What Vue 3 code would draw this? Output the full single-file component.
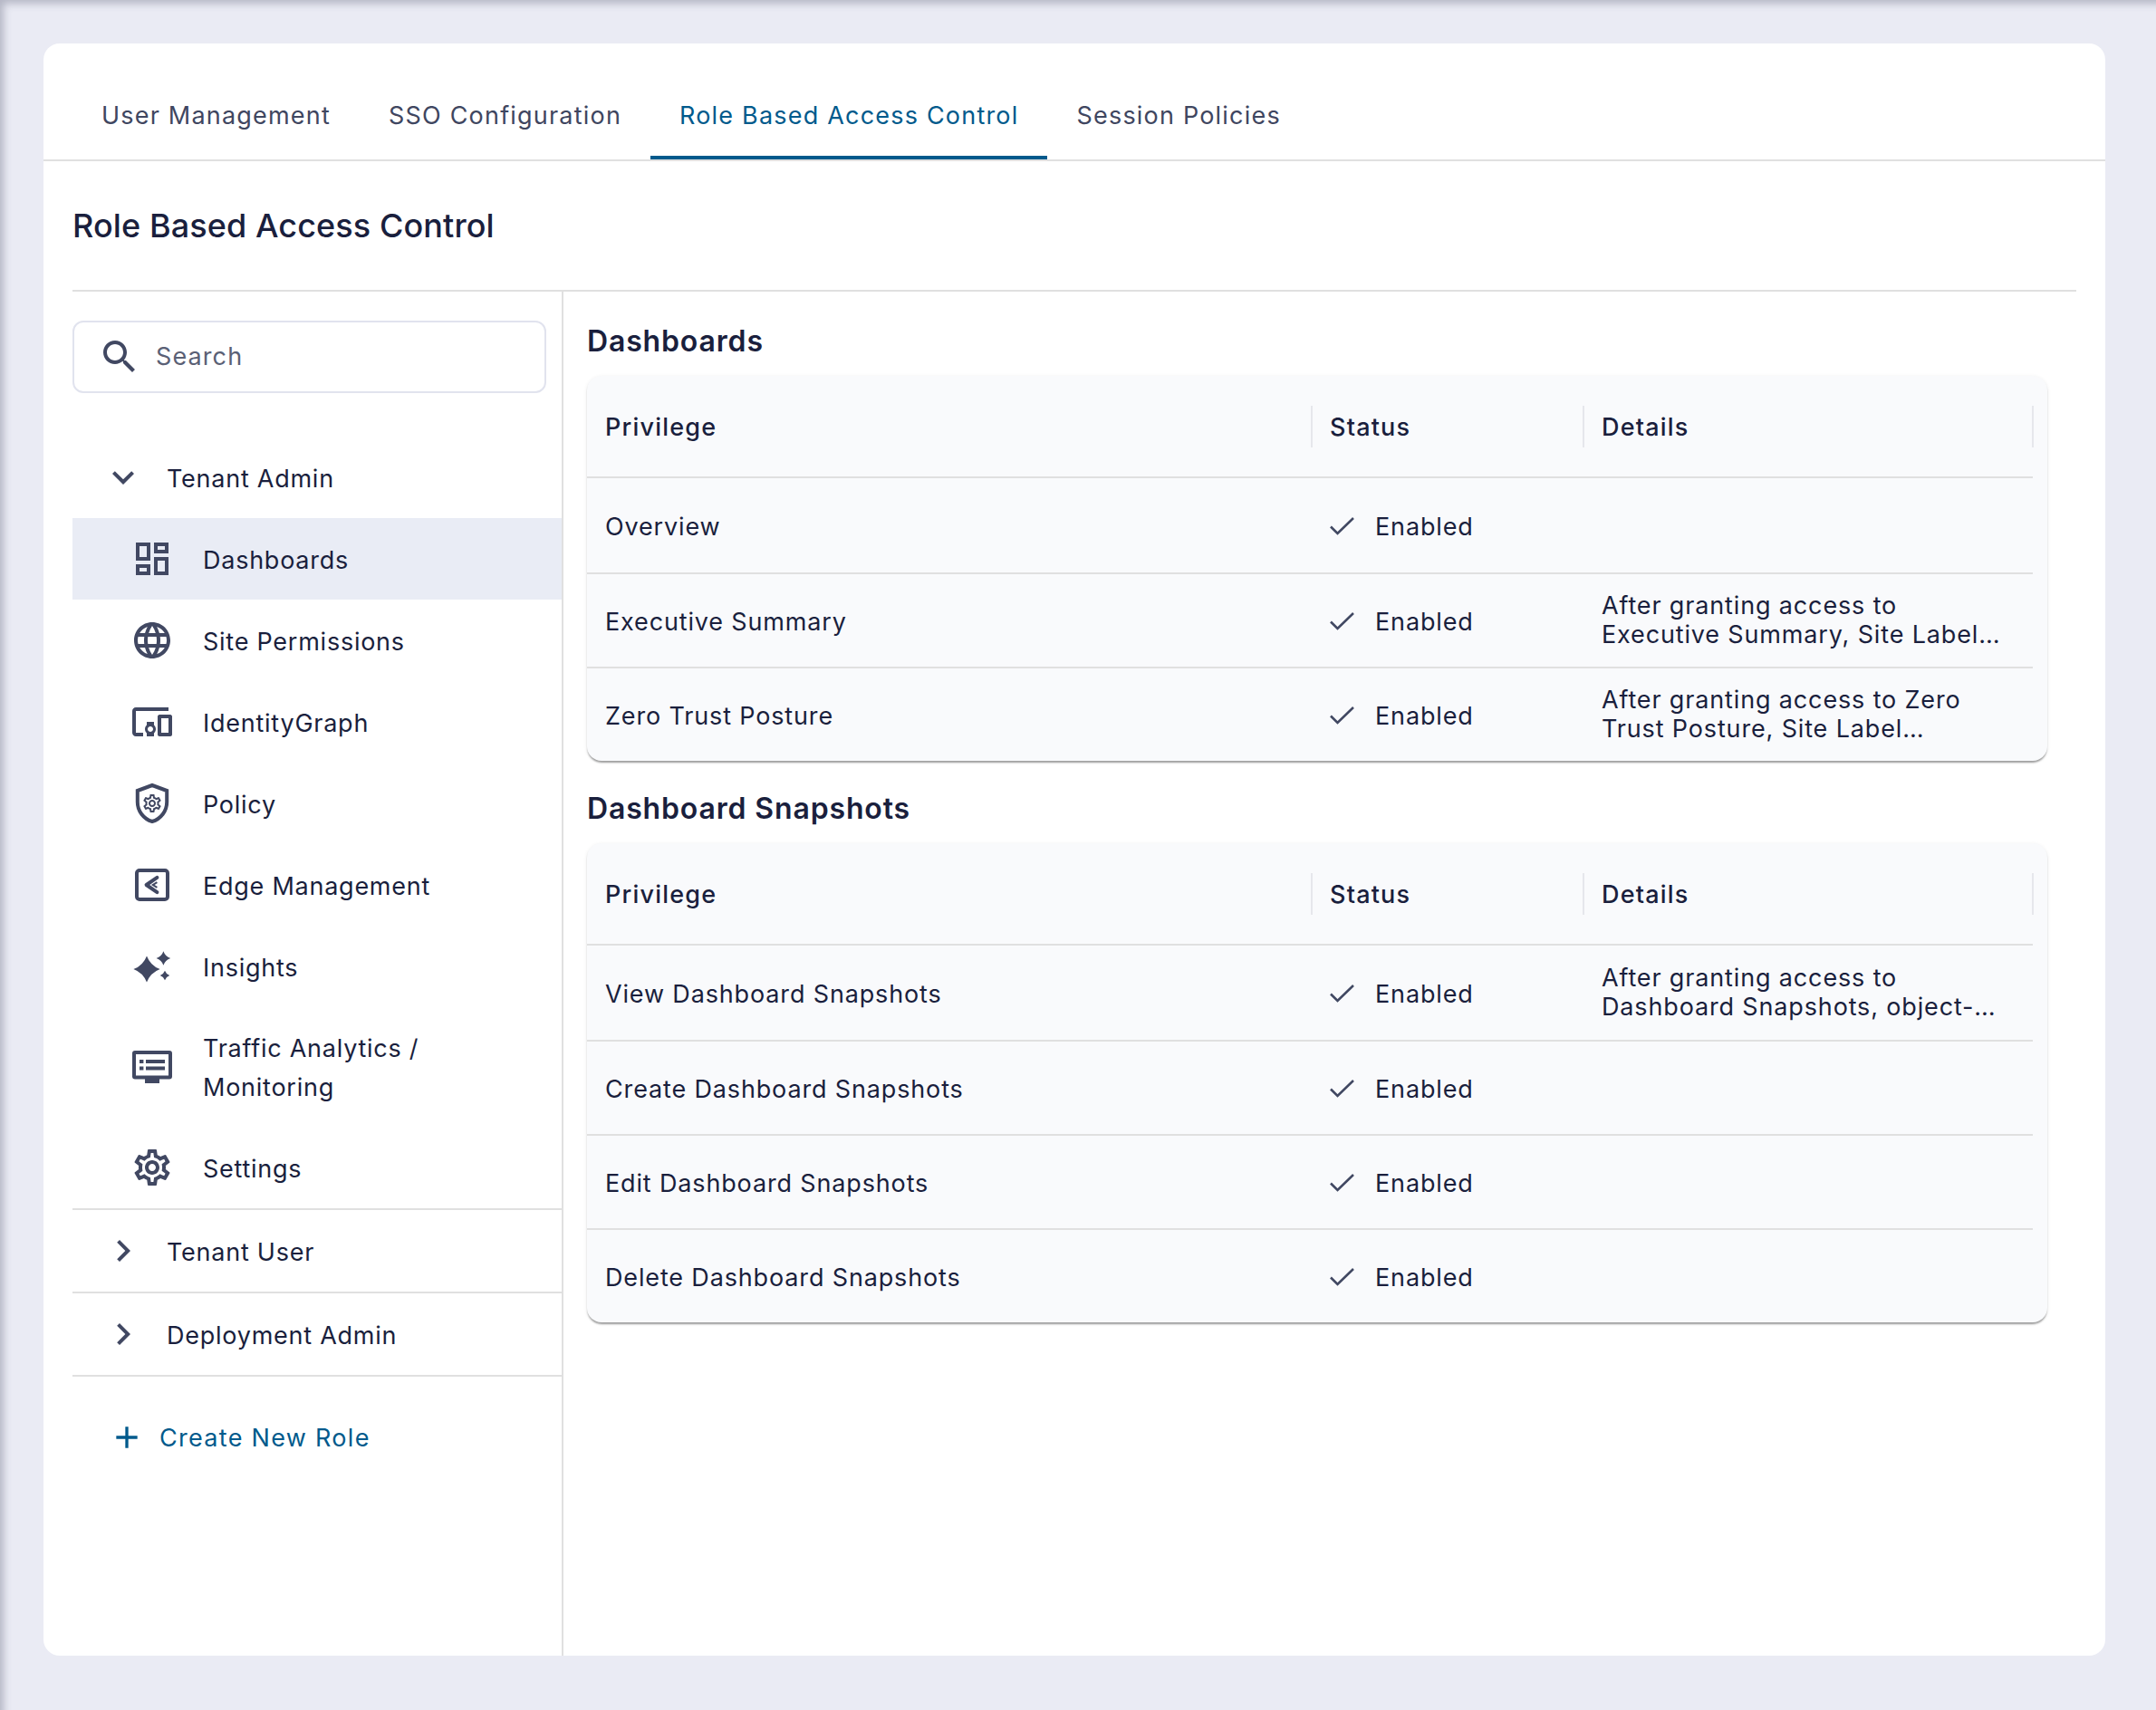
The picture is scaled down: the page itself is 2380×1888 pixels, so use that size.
<script setup>
const tabs = ['User Management', 'SSO Configuration', 'Role Based Access Control', 'Session Policies']

const gear = 'M19.43 12.98c.04-.32.07-.64.07-.98 0-.34-.03-.66-.07-.98l2.11-1.65c.19-.15.24-.42.12-.64l-2-3.46c-.09-.16-.26-.25-.44-.25-.06 0-.12.01-.17.03l-2.49 1c-.52-.4-1.08-.73-1.69-.98l-.38-2.65C14.46 2.18 14.25 2 14 2h-4c-.25 0-.46.18-.49.42l-.38 2.65c-.61.25-1.17.59-1.69.98l-2.49-1c-.06-.02-.12-.03-.18-.03-.17 0-.34.09-.43.25l-2 3.46c-.13.22-.07.49.12.64l2.11 1.65c-.04.32-.07.65-.07.98 0 .33.03.66.07.98l-2.11 1.65c-.19.15-.24.42-.12.64l2 3.46c.09.16.26.25.44.25.06 0 .12-.01.17-.03l2.49-1c.52.4 1.08.73 1.69.98l.38 2.65c.03.24.24.42.49.42h4c.25 0 .46-.18.49-.42l.38-2.65c.61-.25 1.17-.59 1.69-.98l2.49 1c.06.02.12.03.18.03.17 0 .34-.09.43-.25l2-3.46c.12-.22.07-.49-.12-.64l-2.11-1.65zm-1.98-1.71c.04.31.05.52.05.73 0 .21-.02.43-.05.73l-.14 1.13.89.7 1.08.84-.7 1.21-1.27-.51-1.04-.42-.9.68c-.43.32-.84.56-1.25.73l-1.06.43-.16 1.13-.2 1.35h-1.4l-.19-1.35-.16-1.13-1.06-.43c-.43-.18-.83-.41-1.23-.71l-.91-.7-1.06.43-1.27.51-.7-1.21 1.08-.84.89-.7-.14-1.13c-.03-.31-.05-.54-.05-.74s.02-.43.05-.73l.14-1.13-.89-.7-1.08-.84.7-1.21 1.27.51 1.04.42.9-.68c.43-.32.84-.56 1.25-.73l1.06-.43.16-1.13.2-1.35h1.39l.19 1.35.16 1.13 1.06.43c.43.18.83.41 1.23.71l.91.7 1.06-.43 1.27-.51.7 1.21-1.07.85-.89.7.14 1.13zM12 8c-2.21 0-4 1.79-4 4s1.79 4 4 4 4-1.79 4-4-1.79-4-4-4zm0 6c-1.1 0-2-.9-2-2s.9-2 2-2 2 .9 2 2-.9 2-2 2z'

const navItems = [
  { key: 'dash', label: 'Dashboards', selected: true },
  { key: 'site', label: 'Site Permissions' },
  { key: 'graph', label: 'IdentityGraph' },
  { key: 'policy', label: 'Policy' },
  { key: 'edge', label: 'Edge Management' },
  { key: 'insights', label: 'Insights' },
  { key: 'traffic', label: 'Traffic Analytics / Monitoring', tall: true },
  { key: 'settings', label: 'Settings' }
]

const sections = [
  {
    title: 'Dashboards',
    rows: [
      { name: 'Overview', details: [] },
      { name: 'Executive Summary', details: ['After granting access to', 'Executive Summary, Site Label…'] },
      { name: 'Zero Trust Posture', details: ['After granting access to Zero', 'Trust Posture, Site Label…'] }
    ]
  },
  {
    title: 'Dashboard Snapshots',
    rows: [
      { name: 'View Dashboard Snapshots', details: ['After granting access to', 'Dashboard Snapshots, object-…'] },
      { name: 'Create Dashboard Snapshots', details: [] },
      { name: 'Edit Dashboard Snapshots', details: [] },
      { name: 'Delete Dashboard Snapshots', details: [] }
    ]
  }
]
</script>

<template>
  <div class="page">
    <div class="card">
      <div class="tabs">
        <div v-for="tab in tabs" :key="tab" class="tab" :class="{ active: tab === 'Role Based Access Control' }">{{ tab }}</div>
      </div>

      <div class="body">
        <h1 class="title">Role Based Access Control</h1>

        <div class="split">
          <aside class="side">
            <div class="search">
              <svg class="search-icon" viewBox="0 0 24 24"><path d="M15.5 14h-.79l-.28-.27C15.41 12.59 16 11.11 16 9.5 16 5.91 13.09 3 9.5 3S3 5.91 3 9.5 5.91 16 9.5 16c1.61 0 3.09-.59 4.23-1.57l.27.28v.79l5 4.99L20.49 19l-4.99-5zm-6 0C7.01 14 5 11.99 5 9.5S7.01 5 9.5 5 14 7.01 14 9.5 11.99 14 9.5 14z" /></svg>
              <span class="search-text">Search</span>
            </div>

            <div class="group">
              <svg class="chev" viewBox="0 0 24 24"><path d="M16.59 8.59 12 13.17 7.41 8.59 6 10l6 6 6-6z" /></svg>
              <span class="group-label">Tenant Admin</span>
            </div>

            <div v-for="item in navItems" :key="item.key" class="item" :class="{ selected: item.selected, tall: item.tall }">
              <svg class="nav-icon" viewBox="0 0 24 24">
                <path v-if="item.key === 'dash'" d="M19 5v2h-4V5h4M9 5v6H5V5h4m10 8v6h-4v-6h4M9 17v2H5v-2h4M21 3h-8v6h8V3zM11 3H3v10h8V3zm10 8h-8v10h8V11zm-10 4H3v6h8v-6z" />
                <path v-if="item.key === 'site'" d="M11.99 2C6.47 2 2 6.48 2 12s4.47 10 9.99 10C17.52 22 22 17.52 22 12S17.52 2 11.99 2zm6.93 6h-2.95c-.32-1.25-.78-2.45-1.38-3.56 1.84.63 3.37 1.91 4.33 3.56zM12 4.04c.83 1.2 1.48 2.53 1.91 3.96h-3.82c.43-1.43 1.08-2.76 1.91-3.96zM4.26 14C4.1 13.36 4 12.69 4 12s.1-1.36.26-2h3.38c-.08.66-.14 1.32-.14 2 0 .68.06 1.34.14 2H4.26zm.82 2h2.95c.32 1.25.78 2.45 1.38 3.56-1.84-.63-3.37-1.9-4.33-3.56zm2.95-8H5.08c.96-1.66 2.49-2.93 4.33-3.56C8.81 5.55 8.35 6.75 8.03 8zM12 19.96c-.83-1.2-1.48-2.53-1.91-3.96h3.82c-.43 1.43-1.08 2.76-1.91 3.96zM14.34 14H9.66c-.09-.66-.16-1.32-.16-2 0-.68.07-1.35.16-2h4.68c.09.65.16 1.32.16 2 0 .68-.07 1.34-.16 2zm.25 5.56c.6-1.11 1.06-2.31 1.38-3.56h2.95c-.96 1.65-2.49 2.93-4.33 3.56zM16.36 14c.08-.66.14-1.32.14-2 0-.68-.06-1.34-.14-2h3.38c.16.64.26 1.31.26 2s-.1 1.36-.26 2h-3.38z" />
                <path v-if="item.key === 'graph'" d="M3 6h18V4H3c-1.1 0-2 .9-2 2v12c0 1.1.9 2 2 2h4v-2H3V6zm10 6H9v1.78c-.61.55-1 1.33-1 2.22 0 .89.39 1.67 1 2.22V20h4v-1.78c.61-.55 1-1.34 1-2.22 0-.88-.39-1.67-1-2.22V12zm-2 5.5c-.83 0-1.5-.67-1.5-1.5s.67-1.5 1.5-1.5 1.5.67 1.5 1.5-.67 1.5-1.5 1.5zM22 8h-6c-.5 0-1 .5-1 1v10c0 .5.5 1 1 1h6c.5 0 1-.5 1-1V9c0-.5-.5-1-1-1zm-1 10h-4v-8h4v8z" />
                <template v-if="item.key === 'policy'">
                  <path class="line" d="M12 2 3.9 5v6.2c0 5 3.4 9.5 8.100 10.800 4.700-1.300 8.100-5.800 8.100-10.800V5z" />
                  <path :d="gear" transform="translate(12 12) scale(.5) translate(-12 -12)" />
                </template>
                <template v-if="item.key === 'edge'">
                  <rect class="line" x="3.500" y="4" width="17" height="16" rx="1.500" />
                  <path class="line round" d="M14.700 7.900 8.800 12l5.900 4.100" />
                  <path class="line thin" d="M14.700 10.600 12.400 12l2.300 1.400" />
                </template>
                <template v-if="item.key === 'insights'">
                  <path d="M9 6.200Q11 11.500 16.300 13.500 11 15.500 9 20.800 7 15.500 1.700 13.500 7 11.500 9 6.200z" />
                  <path d="M18.200 3.600Q19.200 6.500 22.100 7.500 19.200 8.500 18.200 11.400 17.200 8.500 14.300 7.500 17.200 6.500 18.200 3.600z" />
                  <path d="M19 14.400Q19.700 16.300 21.600 17 19.700 17.700 19 19.600 18.300 17.700 16.400 17 18.300 16.300 19 14.400z" />
                </template>
                <path v-if="item.key === 'traffic'" fill-rule="evenodd" d="M2.500 3h19A1.500 1.500 0 0 1 23 4.500v12.800a1.500 1.500 0 0 1-1.500 1.500H16V21H8v-2.200H2.500A1.500 1.500 0 0 1 1 17.300V4.500A1.500 1.500 0 0 1 2.500 3zM3 5v11.800h18V5zM5 8h2.200v2H5zM8.500 8H19v2H8.500zM5 11.800h2.200v2H5zM8.500 11.800H19v2H8.500z" />
                <path v-if="item.key === 'settings'" :d="gear" />
              </svg>
              <span class="item-label">{{ item.label }}</span>
            </div>

            <div class="group bordered">
              <svg class="chev" viewBox="0 0 24 24"><path d="M10 6 8.590 7.410 13.170 12l-4.580 4.590L10 18l6-6z" /></svg>
              <span class="group-label">Tenant User</span>
            </div>
            <div class="group bordered end">
              <svg class="chev" viewBox="0 0 24 24"><path d="M10 6 8.590 7.410 13.170 12l-4.580 4.590L10 18l6-6z" /></svg>
              <span class="group-label">Deployment Admin</span>
            </div>

            <div class="create">
              <svg class="plus" viewBox="0 0 24 24"><path d="M19 13h-6v6h-2v-6H5v-2h6V5h2v6h6v2z" /></svg>
              <span>Create New Role</span>
            </div>
          </aside>

          <main class="content">
            <section v-for="section in sections" :key="section.title" class="section">
              <h2 class="section-title">{{ section.title }}</h2>
              <div class="paper">
                <div class="row head">
                  <div class="cell">Privilege</div>
                  <div class="cell">Status</div>
                  <div class="cell">Details</div>
                </div>
                <div v-for="row in section.rows" :key="row.name" class="row">
                  <div class="cell">{{ row.name }}</div>
                  <div class="cell status">
                    <svg class="check" viewBox="0 0 27 20"><path d="M1 10.500 8.500 18 26 1" /></svg>
                    <span>Enabled</span>
                  </div>
                  <div class="cell details">
                    <div v-for="line in row.details" :key="line">{{ line }}</div>
                  </div>
                </div>
              </div>
            </section>
          </main>
        </div>
      </div>
    </div>
  </div>
</template>

<style>
html, body {
  margin: 0;
  background: #eaebf4;
}
</style>

<style scoped>
.page {
  width: 2380px;
  height: 1888px;
  box-sizing: border-box;
  padding: 48px 56px 60px 48px;
  background: #eaebf4;
  box-shadow: inset 8px 8px 8px -4px rgba(60, 64, 90, 0.3);
  font-family: Inter, "Liberation Sans", sans-serif;
  color: #1a1f3d;
  font-size: 27px;
  letter-spacing: 0.85px;
}
.card {
  height: 100%;
  background: #fff;
  border-radius: 18px;
  display: flex;
  flex-direction: column;
}
.tabs {
  display: flex;
  height: 130px;
  box-sizing: border-box;
  padding-left: 32px;
  border-bottom: 2px solid #e0e0e0;
}
.tab {
  height: 128px;
  box-sizing: border-box;
  padding: 30px 32px 0;
  display: flex;
  align-items: center;
  color: #3f4660;
  letter-spacing: 1.2px;
  white-space: nowrap;
}
.tab.active {
  color: #005a8c;
  box-shadow: inset 0 -4px 0 #005a8c;
}
.body {
  flex: 1;
  min-height: 0;
  padding: 0 32px;
  display: flex;
  flex-direction: column;
}
.title {
  margin: 0;
  height: 142px;
  border-bottom: 2px solid #e0e0e0;
  display: flex;
  align-items: center;
  font-size: 36px;
  font-weight: 500;
  letter-spacing: 0.1px;
}
.split {
  flex: 1;
  display: flex;
  min-height: 0;
}
.side {
  width: 540px;
  border-right: 2px solid #e0e0e0;
  box-sizing: content-box;
  letter-spacing: 0.75px;
}
.search {
  width: 523px;
  height: 80px;
  box-sizing: border-box;
  margin-top: 32px;
  margin-bottom: 48px;
  border: 2px solid #e1e3ee;
  border-radius: 12px;
  display: flex;
  align-items: center;
  padding-left: 26px;
  gap: 16px;
  color: #5a6075;
}
.search-text {
  padding-bottom: 2px;
  letter-spacing: 1.1px;
}
.search-icon {
  width: 48px;
  height: 48px;
  fill: #414862;
}
.group {
  display: flex;
  align-items: center;
  height: 90px;
  padding-left: 32px;
  gap: 24px;
}
.group-label,
.item-label {
  padding-top: 2px;
}
.chev {
  width: 48px;
  height: 48px;
  fill: #414862;
}
.item {
  display: flex;
  align-items: center;
  height: 90px;
  padding-left: 64px;
  gap: 32px;
  line-height: 43px;
}
.item.tall {
  height: 132px;
  padding-right: 100px;
}
.item.selected {
  background: #e9ecf5;
}
.nav-icon {
  width: 48px;
  height: 48px;
  flex: none;
  fill: #414862;
}
.nav-icon .line {
  fill: none;
  stroke: #414862;
  stroke-width: 2;
}
.nav-icon .round {
  stroke-linecap: round;
  stroke-linejoin: round;
}
.nav-icon .thin {
  stroke-width: 1;
}
.group.bordered {
  border-top: 2px solid #e0e0e0;
}
.group.end {
  border-bottom: 2px solid #e0e0e0;
}
.create {
  display: flex;
  align-items: center;
  margin-top: 47px;
  padding-left: 40px;
  gap: 16px;
  color: #005a8c;
  letter-spacing: 1.3px;
}
.plus {
  width: 40px;
  height: 40px;
  fill: #005a8c;
}
.content {
  flex: 1;
  padding: 2px 32px 0 26px;
}
.section-title {
  margin: 0;
  height: 91px;
  box-sizing: border-box;
  padding-top: 14px;
  display: flex;
  align-items: center;
  font-size: 32px;
  font-weight: 600;
  letter-spacing: 0.85px;
}
.paper {
  background: #f9fafc;
  border-radius: 16px;
  padding-right: 16px;
  box-shadow: 0 3px 2px -1px rgba(0, 0, 0, 0.28), 0 2px 2px 0 rgba(0, 0, 0, 0.1), 0 1px 4px 0 rgba(0, 0, 0, 0.08);
}
.row {
  display: grid;
  grid-template-columns: 800px 300px 1fr;
  height: 104px;
  padding-top: 2px;
  border-top: 2px solid #e0e0e0;
  box-sizing: border-box;
}
.row:nth-child(2) {
  height: 106px;
}
.row.head {
  height: 111px;
  padding-top: 1px;
  border-top: 0;
  font-weight: 500;
  letter-spacing: 1.2px;
}
.cell {
  display: flex;
  align-items: center;
  padding-left: 20px;
}
.head .cell {
  position: relative;
}
.head .cell::after {
  content: '';
  position: absolute;
  right: -1px;
  top: 32px;
  height: 46px;
  width: 2px;
  background: #e6e7ec;
}
.status {
  gap: 23px;
}
.check {
  width: 27px;
  height: 20px;
  fill: none;
  stroke: #414862;
  stroke-width: 2.6;
}
.details {
  display: block;
  align-self: center;
  line-height: 32px;
  padding-bottom: 2px;
}
</style>
